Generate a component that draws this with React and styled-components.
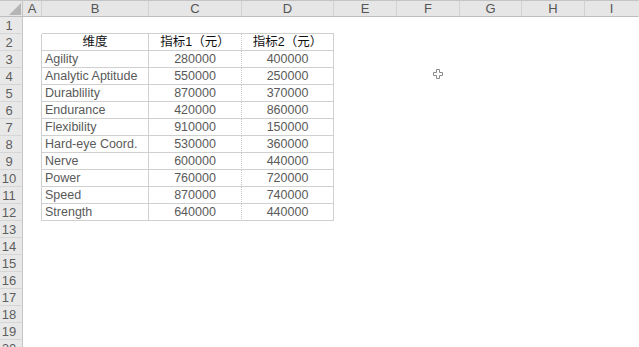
import React from "react"
import styled, { createGlobalStyle, css } from "styled-components"

const GlobalStyle = createGlobalStyle`
  html, body {
    margin: 0;
    padding: 0;
    background: #fff;
    overflow: hidden;
  }
  body {
    font-family: "Liberation Sans", "Noto Sans CJK SC", sans-serif;
  }
`

const COLS = ["A", "B", "C", "D", "E", "F", "G", "H", "I"]
const ROW_COUNT = 20

const data = [
  ["Agility", 280000, 400000],
  ["Analytic Aptitude", 550000, 250000],
  ["Durablility", 870000, 370000],
  ["Endurance", 420000, 860000],
  ["Flexibility", 910000, 150000],
  ["Hard-eye Coord.", 530000, 360000],
  ["Nerve", 600000, 440000],
  ["Power", 760000, 720000],
  ["Speed", 870000, 740000],
  ["Strength", 640000, 440000],
]

const Sheet = styled.div`
  position: relative;
  width: 639px;
  height: 347px;
  overflow: hidden;
  display: grid;
  grid-template-columns: 23px 19px 107px 93px 92px 63px 63px 62px 63px 1fr;
  grid-template-rows: 17px repeat(${ROW_COUNT}, 17px);
  background: #fff;
`

const Corner = styled.div`
  position: relative;
  background: #e6e6e6;
  border-top: 1px solid #c4c4c4;
  border-right: 1px solid #c6c6c6;
  border-bottom: 1px solid #bdbdbd;
  box-sizing: border-box;

  svg {
    position: absolute;
    right: 1px;
    bottom: 1px;
  }
`

const ColHead = styled.div`
  background: #e6e6e6;
  border-top: 1px solid #c4c4c4;
  border-right: 1px solid ${(p) => (p.$last ? "transparent" : "#d2d2d2")};
  border-bottom: 1px solid #bdbdbd;
  box-sizing: border-box;
  display: flex;
  align-items: center;
  justify-content: center;
  font-size: 13px;
  color: #555;
  line-height: 1;
`

const RowHead = styled.div`
  background: #e8e8e8;
  border-right: 1px solid #c6c6c6;
  border-bottom: 1px solid #d6d6d6;
  box-sizing: border-box;
  display: flex;
  align-items: center;
  justify-content: center;
  padding: 1px 4px 0 0;
  font-size: 13px;
  color: #5e5e5e;
  line-height: 1;
`

const solid = "1px solid #d0d0d0"

const Cell = styled.div`
  box-sizing: border-box;
  display: flex;
  align-items: center;
  overflow: hidden;
  white-space: nowrap;
  font-size: 12.5px;
  line-height: 1;
  padding-top: 1px;
  color: ${(p) => (p.$head ? "#111" : "#5a5a5a")};
  justify-content: ${(p) => (p.$align === "left" ? "flex-start" : "center")};
  padding-left: ${(p) => (p.$align === "left" ? "3px" : "0")};
  ${(p) => p.$bottom && css`border-bottom: ${solid};`}
  ${(p) => p.$right === "solid" && css`border-right: ${solid};`}
  ${(p) => p.$right === "dotted" && css`border-right: 1px dotted #c8c8c8;`}
`

const Cursor = styled.svg`
  position: absolute;
  left: 433px;
  top: 69px;
`

function cellProps(row, col) {
  // row: 1..20, col index 0..8 (A..I)
  const inTable = row >= 2 && row <= 12 && col >= 1 && col <= 3
  const p = {}
  if (inTable || (row === 1 && col >= 1 && col <= 3)) p.$bottom = true
  if (row >= 2 && row <= 12) {
    if (col === 0 || col === 1 || col === 3) p.$right = "solid"
    if (col === 2) p.$right = "dotted"
  }
  return p
}

function cellContent(row, col) {
  if (row === 2) {
    if (col === 1) return { text: "维度", head: true }
    if (col === 2) return { text: "指标1（元）", head: true }
    if (col === 3) return { text: "指标2（元）", head: true }
  }
  if (row >= 3 && row <= 12) {
    const d = data[row - 3]
    if (col === 1) return { text: d[0], align: "left" }
    if (col === 2) return { text: d[1] }
    if (col === 3) return { text: d[2] }
  }
  return { text: "" }
}

export default function App() {
  const rows = Array.from({ length: ROW_COUNT }, (_, i) => i + 1)
  return (
    <>
      <GlobalStyle />
      <Sheet>
        <Corner>
          <svg width="12" height="12" viewBox="0 0 12 12">
            <polygon points="12,0 12,12 0,12" fill="#b5b5b5" />
          </svg>
        </Corner>
        {COLS.map((c, i) => (
          <ColHead key={c} $last={i === COLS.length - 1}>
            {c}
          </ColHead>
        ))}
        {rows.map((r) => (
          <React.Fragment key={r}>
            <RowHead>{r}</RowHead>
            {COLS.map((c, ci) => {
              const { text, head, align } = cellContent(r, ci)
              return (
                <Cell key={c} $head={head} $align={align} {...cellProps(r, ci)}>
                  {text}
                </Cell>
              )
            })}
          </React.Fragment>
        ))}
        <Cursor width="10" height="10" viewBox="0 0 10 10">
          <path
            d="M3.5 0.5h3v3h3v3h-3v3h-3v-3h-3v-3h3z"
            fill="#fff"
            stroke="#8a8a8a"
            strokeWidth="1"
          />
        </Cursor>
      </Sheet>
    </>
  )
}
